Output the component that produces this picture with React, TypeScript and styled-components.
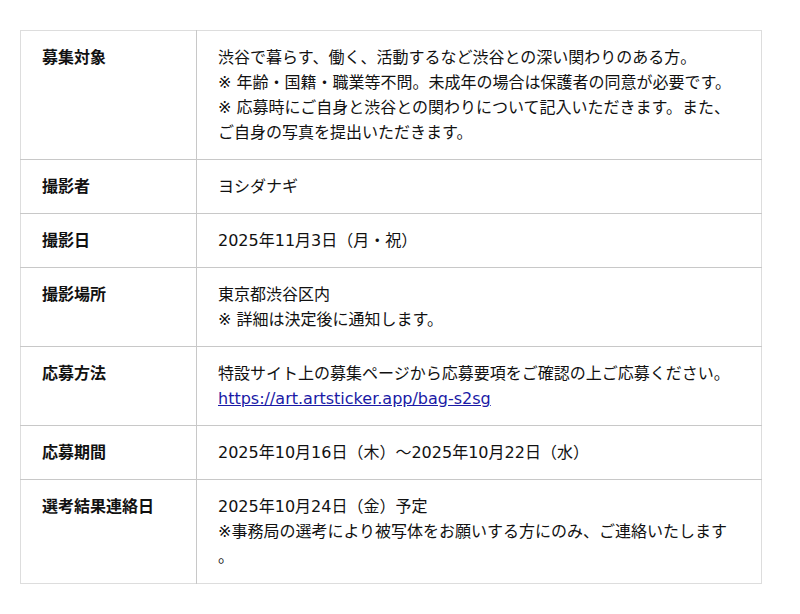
import React, { FC } from 'react';
import styled, { createGlobalStyle } from 'styled-components';

const GlobalStyle = createGlobalStyle`
  body {
    margin: 0;
    background: #fff;
    font-family: "DejaVu Sans", "Noto Sans CJK JP", sans-serif;
    color: #111;
  }
`;

const Page = styled.div`
  padding: 30px 20px;
`;

const Table = styled.table`
  width: 742px;
  border-collapse: collapse;
  border: 1px solid #ddd;
  table-layout: fixed;
  font-size: 16px;
  line-height: 25px;
`;

const Row = styled.tr`
  border-bottom: 1px solid #c8c8c8;
  &:last-child {
    border-bottom: none;
  }
`;

const Label = styled.th`
  width: 134px;
  padding: 14px 20px 14px 21px;
  text-align: left;
  vertical-align: top;
  font-weight: bold;
  border-right: 1px solid #c8c8c8;
`;

const Value = styled.td`
  padding: 14px 22px 14px 21px;
  vertical-align: top;
  line-break: anywhere;
`;

const Line = styled.div``;

const Anchor = styled.a`
  color: #1a1aa6;
  text-decoration: underline;
`;

const items: { label: string; lines: React.ReactNode[] }[] = [
  {
    label: '募集対象',
    lines: [
      '渋谷で暮らす、働く、活動するなど渋谷との深い関わりのある方。',
      '※ 年齢・国籍・職業等不問。未成年の場合は保護者の同意が必要です。',
      '※ 応募時にご自身と渋谷との関わりについて記入いただきます。また、ご自身の写真を提出いただきます。',
    ],
  },
  { label: '撮影者', lines: ['ヨシダナギ'] },
  { label: '撮影日', lines: ['2025年11月3日（月・祝）'] },
  { label: '撮影場所', lines: ['東京都渋谷区内', '※ 詳細は決定後に通知します。'] },
  {
    label: '応募方法',
    lines: [
      '特設サイト上の募集ページから応募要項をご確認の上ご応募ください。',
      <Anchor href="#">https://art.artsticker.app/bag-s2sg</Anchor>,
    ],
  },
  { label: '応募期間', lines: ['2025年10月16日（木）〜2025年10月22日（水）'] },
  {
    label: '選考結果連絡日',
    lines: [
      '2025年10月24日（金）予定',
      '※事務局の選考により被写体をお願いする方にのみ、ご連絡いたします。',
    ],
  },
];

const App: FC = () => (
  <>
    <GlobalStyle />
    <Page>
      <Table>
        <tbody>
          {items.map(({ label, lines }) => (
            <Row key={label}>
              <Label>{label}</Label>
              <Value>
                {lines.map((l, i) => (
                  <Line key={i}>{l}</Line>
                ))}
              </Value>
            </Row>
          ))}
        </tbody>
      </Table>
    </Page>
  </>
);

export default App;
